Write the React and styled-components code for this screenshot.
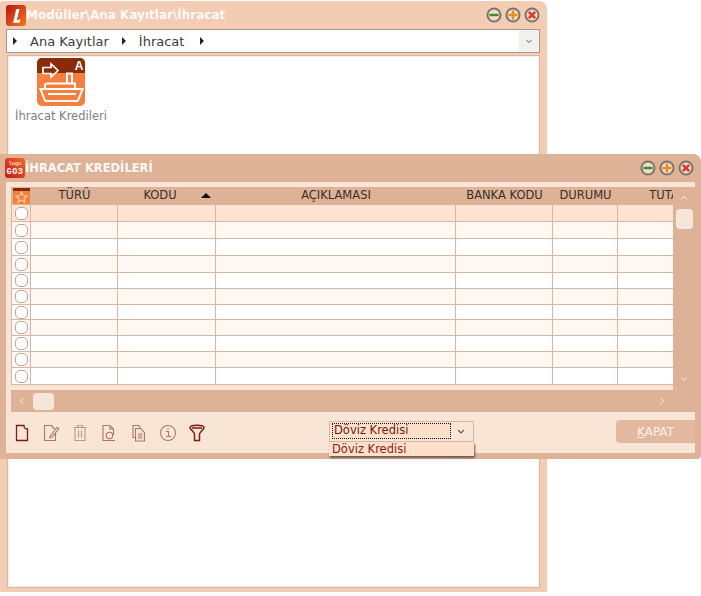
import React from 'react'
import styled, { createGlobalStyle } from 'styled-components'

const GlobalStyle = createGlobalStyle`
  html, body { margin: 0; padding: 0; background: #fff; }
  body { font-family: "DejaVu Sans", Verdana, sans-serif; }
  #root { width: 701px; height: 596px; overflow: hidden; }
`

const Desktop = styled.div`
  position: relative;
  width: 701px;
  height: 596px;
  background: #fff;
  overflow: hidden;
`

const BackWindow = styled.section`
  position: absolute;
  left: 0;
  top: 1px;
  width: 547px;
  height: 591px;
  box-sizing: border-box;
  padding: 0 7px 4px 7px;
  display: flex;
  flex-direction: column;
  background: #f2ccb3;
  border-radius: 3px 8px 0 0;
`

const FrontWindow = styled.section`
  position: absolute;
  left: 0;
  top: 154px;
  width: 701px;
  height: 305px;
  box-sizing: border-box;
  padding: 0 6px 6px 6px;
  display: flex;
  flex-direction: column;
  background: #deb296;
  border-radius: 0 8px 4px 0;
`

const TitleBar = styled.header`
  height: 28px;
  flex: none;
  display: flex;
  align-items: center;
  margin-left: -6px;
  padding: 0 ${p => p.$right}px 0 5px;
  box-sizing: border-box;
`

const TitleText = styled.span`
  flex: 1;
  margin-left: 0;
  color: #fff;
  font: bold ${p => p.$size}px "DejaVu Sans", sans-serif;
  opacity: 0.92;
  white-space: nowrap;
`

const WinButtons = styled.div`
  display: flex;
  gap: 3px;
`

const MenuBar = styled.nav`
  height: 24px;
  flex: none;
  margin-left: -1px;
  width: 534px;
  box-sizing: border-box;
  display: flex;
  align-items: center;
  background: #fff;
  border: 1px solid #a89888;
  padding-left: 6px;
  font-size: 13px;
  color: #3c3c3c;
`

const Crumb = styled.span`
  margin: 0 ${p => p.$after}px 0 13px;
  white-space: nowrap;
`

const Caret = styled.i`
  width: 0;
  height: 0;
  border-left: 4px solid #222;
  border-top: 4px solid transparent;
  border-bottom: 4px solid transparent;
`

const MenuDrop = styled.div`
  margin-left: auto;
  width: 20px;
  height: 22px;
  display: flex;
  align-items: center;
  justify-content: center;
  background: #f3f1ef;
`

const Content = styled.main`
  margin-top: 2px;
  flex: 1;
  background: #fff;
  border: 1px solid #d9b9a3;
  box-shadow: inset 0 0 0 1px #fbeee5;
`

const Shortcut = styled.div`
  width: 108px;
  margin: 2px 0 0 -1px;
  display: flex;
  flex-direction: column;
  align-items: center;
  gap: 3px;
  font-size: 11.5px;
  color: #7e7e7e;
  white-space: nowrap;
`

const Panel = styled.div`
  flex: 1;
  display: flex;
  flex-direction: column;
  background: #f9e5d6;
`

const GridArea = styled.div`
  margin: 5px 0 0 5px;
  width: 684px;
  display: grid;
  grid-template-columns: 662px 22px;
  background: #deb296;
`

const GridTable = styled.div`
  background: #f9e5d6;
  overflow: hidden;
`

const Row = styled.div`
  display: grid;
  grid-template-columns: 20px 87px 98px 240px 97px 65px 100px;
  width: 707px;
  height: ${p => p.$h}px;
  box-sizing: border-box;
  background: ${p => p.$bg};
  border-bottom: ${p => (p.$line ? '1px solid #d8b8a2' : 'none')};
`

const HeadCell = styled.div`
  position: relative;
  box-sizing: border-box;
  padding-right: ${p => p.$pad}px;
  text-align: center;
  font-size: 11.5px;
  line-height: 16px;
  color: #3a3028;
  white-space: nowrap;
  overflow: hidden;
`

const StarCell = styled.div`
  display: flex;
  align-items: center;
  justify-content: center;
`

const Cell = styled.div`
  border-right: 1px solid #d8b8a2;
  border-left: ${p => (p.$first ? '1px solid #d8b8a2' : 'none')};
  display: flex;
  align-items: center;
  justify-content: center;
`

const Check = styled.span`
  width: 13px;
  height: 13px;
  box-sizing: border-box;
  background: #fffdfb;
  border: 1px solid #b5a99f;
  border-radius: 5px;
`

const SortArrow = styled.i`
  position: absolute;
  left: 83px;
  top: 6px;
  width: 0;
  height: 0;
  border-left: 5px solid transparent;
  border-right: 5px solid transparent;
  border-bottom: 5px solid #111;
`

const VScroll = styled.div`
  display: flex;
  flex-direction: column;
  align-items: center;
  padding: 6px 0 0 0;
  gap: 6px;
  box-sizing: border-box;
  svg:last-child { margin-top: auto; margin-bottom: 6px; }
`

const Thumb = styled.div`
  flex: none;
  background: #f6e6da;
  border-radius: 4px;
  width: ${p => p.$w}px;
  height: ${p => p.$h}px;
`

const HScroll = styled.div`
  width: 684px;
  margin-left: 5px;
  height: 22px;
  box-sizing: border-box;
  padding: 0 28px 0 6px;
  flex: none;
  display: flex;
  align-items: center;
  gap: 6px;
  background: #deb296;
  svg:last-child { margin-left: auto; }
`

const Toolbar = styled.div`
  flex: 1;
  position: relative;
  display: flex;
  align-items: center;
  padding-left: 6.5px;
`

const ToolGroup = styled.div`
  display: flex;
  gap: 11.25px;
  width: 316.5px;
`

const Combo = styled.div`
  width: 145px;
  height: 21px;
  margin-top: -3px;
  box-sizing: border-box;
  display: flex;
  align-items: center;
  padding: 1px 2px;
  border: 1px solid #d4b8a2;
`

const ComboValue = styled.div`
  width: 119px;
  height: 16px;
  box-sizing: border-box;
  border: 1px dotted #111;
  background: #fde0cc;
  font-size: 11.5px;
  line-height: 13px;
  padding-left: 1px;
  color: #6e1a10;
  white-space: nowrap;
`

const ComboArrow = styled.div`
  flex: 1;
  display: flex;
  justify-content: center;
`

const ComboList = styled.div`
  position: absolute;
  left: 323px;
  top: 30px;
  width: 145px;
  height: 14px;
  background: #fde0cc;
  box-shadow: 1px 2px 2px #6d5a4d;
  font-size: 11.5px;
  line-height: 14px;
  padding-left: 3px;
  box-sizing: border-box;
  color: #8a1c12;
`

const CloseButton = styled.button`
  position: absolute;
  right: 0;
  top: 8px;
  width: 79px;
  height: 23px;
  border: 0;
  padding: 0;
  text-align: center;
  border-radius: 4px 0 0 4px;
  background: #e2b99e;
  color: #fbf1ea;
  font: 12px "DejaVu Sans", sans-serif;
  u { text-decoration: underline; }
`

const WinButton = ({ color, kind }) => (
  <svg width="16" height="16" viewBox="0 0 16 16">
    <circle cx="8" cy="8" r="6.5" fill="#f1dccc" stroke="#7d7468" strokeWidth="2" />
    {kind === 'min' && <path d="M3.5 8h9" stroke={color} strokeWidth="2.4" />}
    {kind === 'max' && <path d="M3.5 8h9M8 3.5v9" stroke={color} strokeWidth="2.4" />}
    {kind === 'close' && <path d="M4.8 4.8l6.4 6.4M11.2 4.8l-6.4 6.4" stroke={color} strokeWidth="2.6" />}
  </svg>
)

const Controls = () => (
  <WinButtons>
    <WinButton kind="min" color="#3d8a22" />
    <WinButton kind="max" color="#ee8a1a" />
    <WinButton kind="close" color="#dd3b30" />
  </WinButtons>
)

const LogoL = () => (
  <svg width="20" height="21" viewBox="0 0 20 21">
    <defs>
      <linearGradient id="lg" x1="0" x2="1" y1="0" y2="1">
        <stop offset="0" stopColor="#b81218" />
        <stop offset="1" stopColor="#f47a20" />
      </linearGradient>
    </defs>
    <rect width="20" height="21" rx="3" fill="url(#lg)" />
    <path d="M10.500 4h3.500l-.6.6-2.600 10.400q2.500.3 3.700-1l-.8 3.800H6.500l.8-.8 2.700-11.700z" fill="#fff" />
  </svg>
)

const LogoGo = () => (
  <svg width="20" height="20" viewBox="0 0 20 20">
    <defs>
      <linearGradient id="go" x1="0" x2="1" y1="1" y2="0">
        <stop offset="0" stopColor="#c8161c" />
        <stop offset="1" stopColor="#f06a20" />
      </linearGradient>
    </defs>
    <rect width="20" height="20" rx="3" fill="url(#go)" />
    <text x="10" y="7" textAnchor="middle" fontSize="5.500" fill="#fff" fontFamily="Liberation Mono">logo</text>
    <text x="10" y="16" textAnchor="middle" fontSize="8.500" fontWeight="bold" letterSpacing="0.6" fill="#fff" fontFamily="Liberation Mono">GO3</text>
  </svg>
)

const ShipIcon = () => (
  <svg width="48" height="48" viewBox="0 0 48 48">
    <rect width="48" height="48" rx="5" fill="#f47f3e" />
    <path d="M0 15V5a5 5 0 0 1 5-5h38a5 5 0 0 1 5 5v10z" fill="#8a2a08" />
    <text x="42" y="12" textAnchor="middle" fontSize="12" fontWeight="bold" fill="#fff" fontFamily="Liberation Sans">A</text>
    <path d="M6 9.500h8V6l7 6.500-7 6.500v-3.500H6z" fill="none" stroke="#fff" strokeWidth="1.700" />
    <g fill="none" stroke="#fff" strokeWidth="2">
      <path d="M30 25v-9.500h5V25" />
      <path d="M8 31v-4q0-1.500 2-1.500h28V31" />
      <path d="M3.500 31h42l-4 10.500a2 2 0 0 1-2 1.500H9.500a2 2 0 0 1-2-1.500z" />
      <path d="M11 36h28" />
    </g>
  </svg>
)

const StarBox = () => (
  <svg width="17" height="16" viewBox="0 0 17 16">
    <rect width="17" height="16" fill="#f0803e" />
    <rect width="17" height="3" fill="#8a2a08" />
    <path d="M8.500 4l1.600 3.500 3.900.4-2.900 2.600.8 3.800-3.400-2-3.400 2 .8-3.800L3 7.900l3.900-.4z" fill="none" stroke="#fbc9a4" strokeWidth="1.200" />
  </svg>
)

const Chevron = ({ d, color = '#f0d5c2' }) => (
  <svg width="10" height="10" viewBox="0 0 10 10">
    <path d={d} fill="none" stroke={color} strokeWidth="1.200" />
  </svg>
)

const Tool = ({ color, children }) => (
  <svg width="18" height="20" viewBox="0 0 18 20" fill="none" stroke={color} strokeWidth="1.100">
    {children}
  </svg>
)

const columns = ['TÜRÜ', 'KODU', 'AÇIKLAMASI', 'BANKA KODU', 'DURUMU', 'TUTAR']
const rowHeights = [17, 17, 17, 17, 16, 16, 15, 16, 16, 16, 17]

const rowColor = i => {
  if (i === 0) return '#fde3d0'
  if (i === 10) return '#ffffff'
  return i % 2 ? '#fff8f2' : '#ffffff'
}

export default function App() {
  return (
    <Desktop>
      <GlobalStyle />
      <BackWindow>
        <TitleBar $right={0}>
          <LogoL />
          <TitleText $size={12}>Modüller\Ana Kayıtlar\İhracat</TitleText>
          <Controls />
        </TitleBar>
        <MenuBar>
          <Caret />
          <Crumb $after={13}>Ana Kayıtlar</Crumb>
          <Caret />
          <Crumb $after={16}>İhracat</Crumb>
          <Caret />
          <MenuDrop>
            <Chevron d="M2.500 4l2.500 2.500L7.500 4" color="#999" />
          </MenuDrop>
        </MenuBar>
        <Content>
          <Shortcut>
            <ShipIcon />
            İhracat Kredileri
          </Shortcut>
        </Content>
      </BackWindow>

      <FrontWindow>
        <TitleBar $right={1}>
          <LogoGo />
          <TitleText $size={11.5}>İHRACAT KREDİLERİ</TitleText>
          <Controls />
        </TitleBar>
        <Panel>
          <GridArea>
            <GridTable>
              <Row $h={18} $bg="#deb296">
                <StarCell><StarBox /></StarCell>
                {columns.map((c, i) => (
                  <HeadCell key={c} $pad={i === 1 ? 14 : 0}>
                    {c}
                    {i === 1 && <SortArrow />}
                  </HeadCell>
                ))}
              </Row>
              {rowHeights.map((h, i) => (
                <Row key={i} $h={h} $bg={rowColor(i)} $line>
                  <Cell $first><Check /></Cell>
                  {columns.map(c => <Cell key={c} />)}
                </Row>
              ))}
              <Row $h={5} $bg="#f9e5d6" />
            </GridTable>
            <VScroll>
              <Chevron d="M2 6.500l3-3 3 3" />
              <Thumb $w={17} $h={20} />
              <Chevron d="M2 3.500l3 3 3-3" />
            </VScroll>
          </GridArea>
          <HScroll>
            <Chevron d="M6.500 2l-3 3 3 3" />
            <Thumb $w={21} $h={17} />
            <Chevron d="M3.500 2l3 3-3 3" />
          </HScroll>
          <Toolbar>
            <ToolGroup>
              <Tool color="#7a1e10">
                <path d="M3.500 2.500h7.500q0 3.500 3.500 3.500v11.500h-11z" strokeWidth="1.300" />
              </Tool>
              <Tool color="#a87a62">
                <path d="M13.500 10.500v7h-11v-15h7.500q0 3 3 3M8.500 12.500l6.500-8 1.800 1.400-6.500 8-2.500.8z" />
              </Tool>
              <Tool color="#c09a84">
                <path d="M2.500 4.500h13M6.500 4.500v-2h5v2M4 4.500v13h10v-13M7.500 7.500v7.500M10.500 7.500v7.500" />
              </Tool>
              <Tool color="#a87a62">
                <path d="M13.500 12V6l-3.500-3.500H3v15h5M10 2.500V6h3.500" />
                <circle cx="9.500" cy="12.500" r="3.200" />
                <path d="M8 17.500h7" />
              </Tool>
              <Tool color="#a87a62">
                <path d="M5 14.500H3v-12h5.500l2 2M5.500 5.500h5l4 4v8.500h-9zM8 11h4.500M8 13h4.500M8 15h4.500" />
              </Tool>
              <Tool color="#a87a62">
                <circle cx="9" cy="10" r="7.500" />
                <path d="M7 8.500h2.500v5M7 13.500h5M9 5v1.500" />
              </Tool>
              <Tool color="#7a1e10">
                <path d="M2 4.500c0-3 14-3 14 0 0 1.500-4.500 5.500-4.500 6.500v6.500H6.500V11C6.500 10 2 6 2 4.500zM4 5h10" strokeWidth="1.500" />
              </Tool>
            </ToolGroup>
            <Combo>
              <ComboValue>Döviz Kredisi</ComboValue>
              <ComboArrow>
                <Chevron d="M2 4l3 3 3-3" color="#6b5a4e" />
              </ComboArrow>
            </Combo>
            <ComboList>Döviz Kredisi</ComboList>
            <CloseButton><u>K</u>APAT</CloseButton>
          </Toolbar>
        </Panel>
      </FrontWindow>
    </Desktop>
  )
}
